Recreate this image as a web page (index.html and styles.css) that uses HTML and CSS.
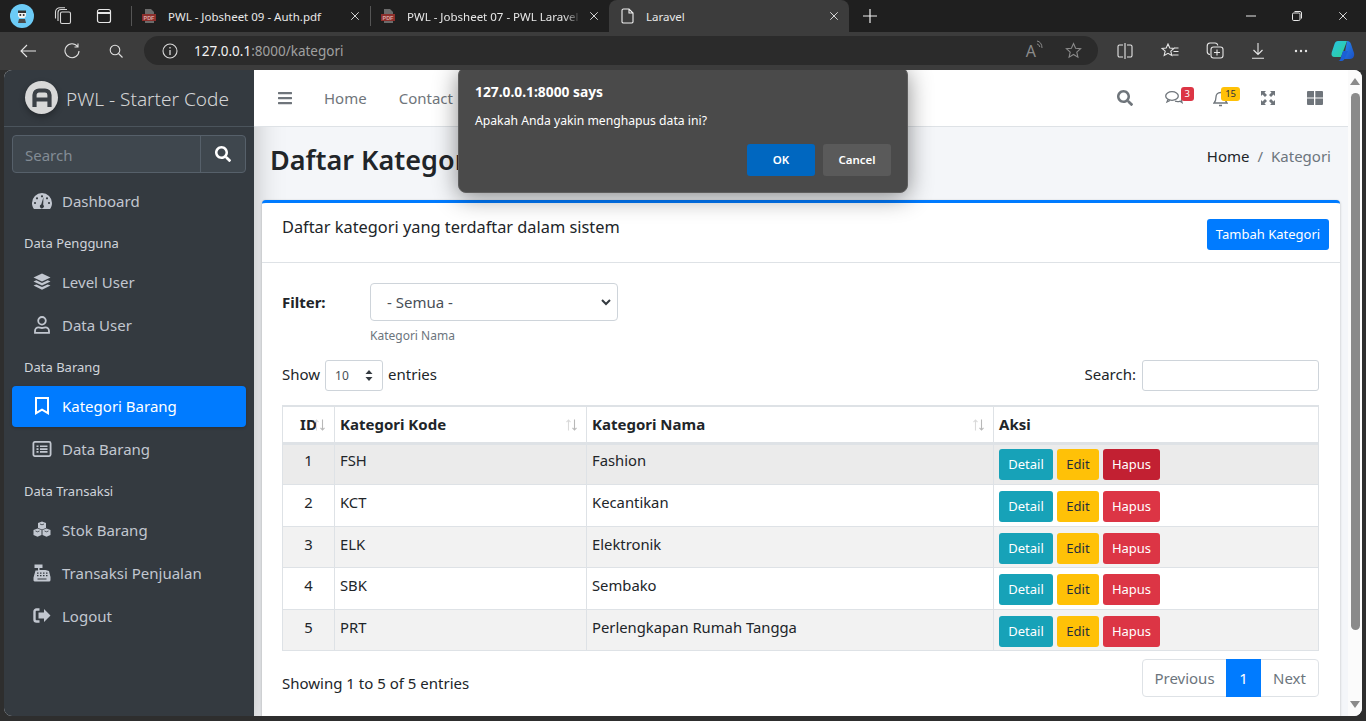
FILE: index.html
```html
<!DOCTYPE html>
<html>
  <head>
    <meta name="viewport" content="width=device-width, initial-scale=1.0">
    <title>Laravel</title>
    <link rel="stylesheet" href="styles.css">
  </head>

  <body>
    <svg class="sprites" width="0" height="0">
      <symbol id="i-search" viewBox="0 0 512 512"><path fill="currentColor" d="M505 442.7L405.3 343c-4.5-4.5-10.6-7-17-7H372c27.6-35.3 44-79.7 44-128C416 93.1 322.9 0 208 0S0 93.1 0 208s93.1 208 208 208c48.3 0 92.7-16.4 128-44v16.3c0 6.4 2.5 12.5 7 17l99.7 99.7c9.4 9.4 24.6 9.4 33.9 0l28.3-28.3c9.4-9.4 9.4-24.6.1-34zM208 336c-70.7 0-128-57.2-128-128 0-70.7 57.2-128 128-128 70.7 0 128 57.2 128 128 0 70.7-57.2 128-128 128z"/></symbol>
      <symbol id="i-close" viewBox="0 0 12 12"><path d="M1.5 1.5l9 9M10.5 1.5l-9 9" stroke="currentColor" stroke-width="1.1" fill="none"/></symbol>
      <symbol id="i-sort" viewBox="0 0 11 12"><path d="M2.500 11.500V1M.5 3.200l2-2.200 2 2.200" fill="none" stroke="#dadada" stroke-width="1.100"/><path d="M8.500 .5V11M6.500 8.800l2 2.200 2-2.200" fill="none" stroke="#b8b8b8" stroke-width="1.100"/></symbol>
    </svg>

    <!-- browser tabs -->
    <div class="tabstrip">
      <div class="slot slot-profile">
        <svg width="24" height="24" viewBox="0 0 24 24"><circle cx="12" cy="12" r="12" fill="#6ccbf6"/><path d="M8 7h8v5l-1.500 2h-5L8 12z" fill="#f2f2f2"/><path d="M8 6.500h8v2.500H8z" fill="#333"/><path d="M9 15h6l1 4H8z" fill="#4a4a4a"/><circle cx="10.300" cy="11" r="1" fill="#333"/><circle cx="13.700" cy="11" r="1" fill="#333"/></svg>
      </div>
      <div class="slot slot-collections">
        <svg width="18" height="18" viewBox="0 0 18 18" fill="none" stroke="#d8d8d8" stroke-width="1.100"><rect x="6.500" y="5" width="10" height="11.500" rx="1.500"/><path d="M4 14V5.500A3 3 0 0 1 7 2.500h6M1.500 11.500V5A4.500 4.500 0 0 1 6 .7h5"/></svg>
      </div>
      <div class="slot slot-tabs">
        <svg width="16" height="16" viewBox="0 0 16 16" fill="none" stroke="#e6e6e6" stroke-width="1.200"><rect x="1.500" y="1.500" width="13" height="13" rx="2"/><path d="M1.500 5h13" stroke-width="2"/></svg>
      </div>
      <div class="sep sep-first"></div>
      <div class="tab">
        <svg class="tab-ico" width="16" height="16" viewBox="0 0 16 16"><path d="M4 1h6l3 3v2H4z" fill="#6b6b6b"/><rect x="1" y="6" width="14" height="7" fill="#8c2f2c"/><path d="M4 13h9v2H4z" fill="#6b6b6b"/><text x="8" y="11.600" font-size="5.400" font-weight="700" text-anchor="middle" fill="#d9a9a6" font-family="Liberation Sans, sans-serif">PDF</text></svg>
        <span class="tab-text">PWL - Jobsheet 09 - Auth.pdf</span>
        <svg class="tab-close" width="10" height="10"><use href="#i-close"/></svg>
      </div>
      <div class="sep"></div>
      <div class="tab">
        <svg class="tab-ico" width="16" height="16" viewBox="0 0 16 16"><path d="M4 1h6l3 3v2H4z" fill="#6b6b6b"/><rect x="1" y="6" width="14" height="7" fill="#8c2f2c"/><path d="M4 13h9v2H4z" fill="#6b6b6b"/><text x="8" y="11.600" font-size="5.400" font-weight="700" text-anchor="middle" fill="#d9a9a6" font-family="Liberation Sans, sans-serif">PDF</text></svg>
        <span class="tab-text fade">PWL - Jobsheet 07 - PWL Laravel</span>
        <svg class="tab-close" width="10" height="10"><use href="#i-close"/></svg>
      </div>
      <div class="tab tab-active">
        <svg class="tab-ico" width="14" height="16" viewBox="0 0 14 16" fill="none" stroke="#f0f0f0" stroke-width="1.100"><path d="M2.500 1h5.500l4 4v9a1.500 1.500 0 0 1-1.500 1h-8A1.500 1.500 0 0 1 1 14V2.500A1.500 1.500 0 0 1 2.500 1zM8 1v4h4"/></svg>
        <span class="tab-text">Laravel</span>
        <svg class="tab-close" width="10" height="10"><use href="#i-close"/></svg>
      </div>
      <div class="slot slot-new">
        <svg width="14" height="14" viewBox="0 0 14 14"><path d="M7 0v14M0 7h14" stroke="#eee" stroke-width="1.200"/></svg>
      </div>
      <div class="spacer"></div>
      <div class="slot slot-win"><svg width="10" height="10" viewBox="0 0 10 10"><path d="M0 5h10" stroke="#e8e8e8"/></svg></div>
      <div class="slot slot-win"><svg width="10" height="10" viewBox="0 0 10 10" fill="none" stroke="#e8e8e8"><rect x=".5" y="2" width="7.500" height="7.500" rx="1.200"/><path d="M2.500 .5h5.500a1.500 1.500 0 0 1 1.500 1.500v5.500"/></svg></div>
      <div class="slot slot-win"><svg width="10" height="10"><use href="#i-close"/></svg></div>
    </div>

    <!-- browser toolbar -->
    <div class="toolbar">
      <div class="slot">
        <svg width="16" height="14" viewBox="0 0 16 14" fill="none" stroke="#e6e6e6" stroke-width="1.100"><path d="M16 7H1M7 1L1 7l6 6"/></svg>
      </div>
      <div class="slot">
        <svg width="16" height="16" viewBox="0 0 16 16" fill="none" stroke="#e0e0e0" stroke-width="1.100"><path d="M13.600 3.500A7 7 0 1 0 15 8M14 .5v3.500h-3.500"/></svg>
      </div>
      <div class="slot">
        <svg width="14" height="14" viewBox="0 0 14 14" fill="none" stroke="#e0e0e0" stroke-width="1.100"><circle cx="6" cy="6" r="4.800"/><path d="M9.500 9.500l4 4"/></svg>
      </div>
      <div class="addressbar">
        <svg class="addr-info" width="16" height="16" viewBox="0 0 16 16" fill="none" stroke="#d8d8d8" stroke-width="1.100"><circle cx="8" cy="8" r="7"/><path d="M8 7v5M8 4v1.500" stroke-width="1.300"/></svg>
        <span class="addr-url"><b>127.0.0.1</b>:8000/kategori</span>
        <div class="spacer"></div>
        <span class="addr-read">A<svg width="7" height="9" viewBox="0 0 7 9" fill="none" stroke="#8a8a8a"><path d="M1 1c3 .5 5 3 5 7M1 4c1.500.3 2.500 1.500 2.800 3"/></svg></span>
        <svg class="addr-star" width="17" height="17" viewBox="0 0 17 17" fill="none" stroke="#8a8a8a" stroke-width="1.100"><path d="M8.500 1.500l2.100 4.700 5 .5-3.800 3.400 1.100 5-4.400-2.600-4.400 2.600 1.100-5L1.400 6.700l5-.5z"/></svg>
      </div>
      <div class="slot slot-first">
        <svg width="16" height="16" viewBox="0 0 16 16" fill="none" stroke="#e6e6e6" stroke-width="1.100"><path d="M6 2H2.500A1.500 1.500 0 0 0 1 3.500v9A1.500 1.500 0 0 0 2.500 14H6M10 2h3.500A1.500 1.500 0 0 1 15 3.500v9a1.500 1.500 0 0 1-1.500 1.500H10M8 0v16"/></svg>
      </div>
      <div class="slot slot-wide">
        <svg width="18" height="16" viewBox="0 0 18 16" fill="none" stroke="#e6e6e6" stroke-width="1.100"><path d="M7 1l1.800 4 4.200.4-3.200 2.800 1 4.300L7 10.300l-3.800 2.200 1-4.300L1 5.400l4.200-.4zM13 5h4.500M12.500 8.500h5M11.500 12h6"/></svg>
      </div>
      <div class="slot">
        <svg width="18" height="17" viewBox="0 0 18 17" fill="none" stroke="#e6e6e6" stroke-width="1.100"><path d="M4 12.500A3 3 0 0 1 1.200 9.500V4A3 3 0 0 1 4 1h5a3 3 0 0 1 2.800 2.500"/><rect x="5" y="5" width="12" height="11" rx="2.500"/><path d="M11 7.500v6M8 10.500h6"/></svg>
      </div>
      <div class="slot slot-narrow">
        <svg width="14" height="16" viewBox="0 0 14 16" fill="none" stroke="#e6e6e6" stroke-width="1.100"><path d="M7 0v11.500M2.500 7L7 11.500 11.500 7M1 15.300h12"/></svg>
      </div>
      <div class="slot">
        <svg width="14" height="4" viewBox="0 0 14 4" fill="#e6e6e6"><circle cx="2" cy="2" r="1.200"/><circle cx="7" cy="2" r="1.200"/><circle cx="12" cy="2" r="1.200"/></svg>
      </div>
      <div class="slot slot-last">
        <svg width="24" height="24" viewBox="0 0 24 24"><defs><linearGradient id="cp1" x1="0" y1="0" x2="1" y2="1"><stop offset="0" stop-color="#27c3e8"/><stop offset="1" stop-color="#2fd08e"/></linearGradient><linearGradient id="cp2" x1="0" y1="0" x2="1" y2="1"><stop offset="0" stop-color="#2a8cf0"/><stop offset="1" stop-color="#1a4fc4"/></linearGradient></defs><path d="M7 2h9l-6 16H3.500C1 18 0 16 .7 13.500L3.500 5C4 3.200 5.500 2 7 2z" fill="url(#cp1)"/><path d="M16 2c2 0 3.500 1 4 3l3 9c.8 3-1 6-4 6h-8l3-7z" fill="url(#cp2)"/><path d="M10 18l2-6h5l-3 7c-.5 1.500-1.500 3-3.500 3H7c2 0 2.500-2 3-4z" fill="#1b5fd6"/></svg>
      </div>
    </div>

    <div class="viewport">
      <!-- sidebar -->
      <aside class="sidebar">
        <div class="brand">
          <div class="brand-logo">
            <svg width="20" height="20" viewBox="0 0 20 20" fill="none" stroke="#3b4046" stroke-width="4.200"><path d="M2.500 19V7a4.500 4.500 0 0 1 4.500-4.500h6A4.500 4.500 0 0 1 17.500 7v12M2.500 11.500h15"/></svg>
          </div>
          <span class="brand-text">PWL - Starter Code</span>
        </div>
        <div class="side-search">
          <div class="side-input">Search</div>
          <div class="side-btn"><svg width="16" height="16"><use href="#i-search"/></svg></div>
        </div>
        <nav class="nav">
          <a class="nav-link">
            <svg class="nav-ico" width="20" height="18" viewBox="0 0 20 18"><path fill="currentColor" d="M10 1a10 10 0 0 0-10 10c0 2 .5 3.800 1.400 5.300.2.400.6.700 1 .700h15.200c.4 0 .8-.3 1-.7.900-1.500 1.400-3.300 1.400-5.300A10 10 0 0 0 10 1z"/><g fill="#343a40"><path d="M11.500 5l-2.300 7.500a2 2 0 1 0 2 .3z"/><circle cx="10" cy="4.300" r="1.100"/><circle cx="5" cy="6.300" r="1.100"/><circle cx="3" cy="11" r="1.100"/><circle cx="15" cy="6.300" r="1.100"/><circle cx="17" cy="11" r="1.100"/></g></svg>
            <span>Dashboard</span>
          </a>
          <div class="nav-header">Data Pengguna</div>
          <a class="nav-link">
            <svg class="nav-ico" width="18" height="18" viewBox="0 0 18 18" fill="currentColor"><path d="M9 .5l8.500 4L9 8.500.5 4.500z"/><path d="M3.300 7.300L9 10l5.700-2.700 2.800 1.300L9 12.600.5 8.600z"/><path d="M3.300 11.400L9 14l5.700-2.600 2.800 1.200L9 16.800.5 12.600z"/></svg>
            <span>Level User</span>
          </a>
          <a class="nav-link">
            <svg class="nav-ico" width="16" height="18" viewBox="0 0 16 18" fill="none" stroke="currentColor" stroke-width="1.800"><circle cx="8" cy="4.800" r="3.800"/><path d="M1 16.900v-2a3.500 3.500 0 0 1 3.500-3.500c1 0 1.800.6 3.500.6s2.500-.6 3.500-.6A3.500 3.500 0 0 1 15 14.900v2z"/></svg>
            <span>Data User</span>
          </a>
          <div class="nav-header">Data Barang</div>
          <a class="nav-link active">
            <svg class="nav-ico" width="14" height="18" viewBox="0 0 14 18" fill="none" stroke="currentColor" stroke-width="2"><path d="M1 1h12v15.200l-6-3.500-6 3.500z"/></svg>
            <span>Kategori Barang</span>
          </a>
          <a class="nav-link">
            <svg class="nav-ico" width="19" height="16" viewBox="0 0 19 16"><rect x=".9" y=".9" width="17.200" height="14.200" rx="1.500" fill="none" stroke="currentColor" stroke-width="1.800"/><path d="M4 4.500h2v1.600H4zM7.500 4.500H15v1.600H7.500zM4 7.300h2v1.600H4zM7.500 7.300H15v1.600H7.500zM4 10.100h2v1.600H4zM7.500 10.100H15v1.600H7.500z" fill="currentColor"/></svg>
            <span>Data Barang</span>
          </a>
          <div class="nav-header">Data Transaksi</div>
          <a class="nav-link">
            <svg class="nav-ico" width="19" height="17" viewBox="0 0 19 17" fill="currentColor"><path d="M9.500.5l4 1.500v5l-4 1.600-4-1.600V2z"/><path d="M5 7.500l4 1.500v5L5 15.800 1 14V9z"/><path d="M14 7.500l4 1.500v5l-4 1.800-4-1.800V9z"/><path d="M3 10l2 .8 2-.8M12 10l2 .8 2-.8M7.500 3l2 .8 2-.8" stroke="#343a40" stroke-width=".8" fill="none"/></svg>
            <span>Stok Barang</span>
          </a>
          <a class="nav-link">
            <svg class="nav-ico" width="19" height="18" viewBox="0 0 19 18" fill="currentColor"><path d="M2 .5h8v3.500H7v2h6l3.500 1 1.500 6v3a1.500 1.500 0 0 1-1.500 1.500h-14A1.500 1.500 0 0 1 1 16.500v-3l2-7h2.500V4H2z"/><path d="M4.500 8.500h1.500v1.300H4.500zM7.500 8.500H9v1.300H7.500zM10.500 8.500H12v1.300h-1.500zM13.500 8.500H15v1.300h-1.500zM4.500 11h1.500v1.300H4.500zM7.500 11H9v1.300H7.500zM10.500 11H12v1.300h-1.500zM13.500 11H15v1.300h-1.500zM5 14.500h9v1H5z" fill="#343a40"/></svg>
            <span>Transaksi Penjualan</span>
          </a>
          <a class="nav-link">
            <svg class="nav-ico" width="18" height="15" viewBox="0 0 18 15"><path d="M6.500 1.500H3.500A2 2 0 0 0 1.500 3.500v8a2 2 0 0 0 2 2h3" fill="none" stroke="currentColor" stroke-width="2.400"/><path d="M11 1v3.500H5.500v6H11V14l6.500-6.500z" fill="currentColor"/></svg>
            <span>Logout</span>
          </a>
        </nav>
      </aside>

      <div class="wrapper">
        <!-- top navbar -->
        <header class="topbar">
          <svg class="top-bars" width="14" height="16" viewBox="0 0 448 512"><path fill="currentColor" d="M16 132h416c8.837 0 16-7.163 16-16V76c0-8.837-7.163-16-16-16H16C7.163 60 0 67.163 0 76v40c0 8.837 7.163 16 16 16zm0 160h416c8.837 0 16-7.163 16-16v-40c0-8.837-7.163-16-16-16H16c-8.837 0-16 7.163-16 16v40c0 8.837 7.163 16 16 16zm0 160h416c8.837 0 16-7.163 16-16v-40c0-8.837-7.163-16-16-16H16c-8.837 0-16 7.163-16 16v40c0 8.837 7.163 16 16 16z"/></svg>
          <a class="top-link">Home</a>
          <a class="top-link">Contact</a>
          <div class="spacer"></div>
          <div class="top-ico top-search">
            <svg width="16" height="16"><use href="#i-search"/></svg>
          </div>
          <div class="top-ico">
            <svg width="18" height="16" viewBox="0 0 18 16" fill="none" stroke="currentColor" stroke-width="1.300"><ellipse cx="7" cy="6" rx="6.300" ry="4.300"/><path d="M3 9.500L2 12l3-1.500M10 11.200c2.800.8 4 .3 5 0l2 1.300-.6-2.300c.6-.7 1-1.500.6-2.600"/></svg>
            <span class="badge badge-red">3</span>
          </div>
          <div class="top-ico">
            <svg width="15" height="17" viewBox="0 0 15 17" fill="none" stroke="currentColor" stroke-width="1.300"><path d="M1 13c1.500-1.500 2-3 2-6a4.500 4.500 0 0 1 9 0c0 3 .5 4.500 2 6z"/><path d="M6 15.500h3" stroke-width="1.500"/></svg>
            <span class="badge badge-yellow">15</span>
          </div>
          <div class="top-ico">
            <svg width="14" height="14" viewBox="0 0 14 14" fill="currentColor"><path d="M0 0h5L3.500 1.500 6 4 4 6 1.500 3.500 0 5zM14 0v5l-1.500-1.500L10 6 8 4l2.500-2.500L9 0zM0 14V9l1.500 1.500L4 8l2 2-2.500 2.500L5 14zM14 14H9l1.500-1.500L8 10l2-2 2.500 2.500L14 9z"/></svg>
          </div>
          <div class="top-ico">
            <svg width="16" height="14" viewBox="0 0 16 14" fill="currentColor"><path d="M0 1a1 1 0 0 1 1-1h6v6.400H0zM8.300 0H15a1 1 0 0 1 1 1v5.400H8.300zM0 7.600h7V14H1a1 1 0 0 1-1-1zM8.300 7.600H16V13a1 1 0 0 1-1 1H8.300z"/></svg>
          </div>
        </header>

        <div class="content">
          <div class="content-head">
            <h1>Daftar Kategori</h1>
            <div class="breadcrumb"><a>Home</a><i>/</i><span>Kategori</span></div>
          </div>

          <section class="card">
            <div class="card-head">
              <h3>Daftar kategori yang terdaftar dalam sistem</h3>
              <a class="btn btn-add">Tambah Kategori</a>
            </div>
            <div class="card-body">
              <div class="filter">
                <label>Filter:</label>
                <div>
                  <div class="filter-select">
                    <span>- Semua -</span>
                    <svg width="10" height="7" viewBox="0 0 10 7" fill="none" stroke="#343a40" stroke-width="2"><path d="M1 1l4 4 4-4"/></svg>
                  </div>
                  <small>Kategori Nama</small>
                </div>
              </div>

              <div class="dt-top">
                <div class="dt-length">
                  <span class="dt-label">Show</span>
                  <div class="length-select">
                    <span>10</span>
                    <svg width="8" height="11" viewBox="0 0 8 11" fill="#343a40"><path d="M4 0l3.500 4H.5zM4 11L.5 7h7z"/></svg>
                  </div>
                  <span class="dt-label">entries</span>
                </div>
                <div class="dt-search"><span class="dt-label">Search:</span><div class="dt-input"></div></div>
              </div>

              <table class="table">
                <colgroup>
                  <col class="col-id"><col class="col-kode"><col class="col-nama"><col>
                </colgroup>
                <thead>
                  <tr>
                    <th class="center">ID<svg class="sort" width="11" height="12"><use href="#i-sort"/></svg></th>
                    <th>Kategori Kode<svg class="sort" width="11" height="12"><use href="#i-sort"/></svg></th>
                    <th>Kategori Nama<svg class="sort" width="11" height="12"><use href="#i-sort"/></svg></th>
                    <th>Aksi</th>
                  </tr>
                </thead>
                <tbody>
                  <tr class="hover">
                    <td class="center">1</td><td>FSH</td><td>Fashion</td>
                    <td class="actions"><div class="btn-row"><a class="btn btn-sm btn-info">Detail</a><a class="btn btn-sm btn-warning">Edit</a><a class="btn btn-sm btn-danger hovered">Hapus</a></div></td>
                  </tr>
                  <tr>
                    <td class="center">2</td><td>KCT</td><td>Kecantikan</td>
                    <td class="actions"><div class="btn-row"><a class="btn btn-sm btn-info">Detail</a><a class="btn btn-sm btn-warning">Edit</a><a class="btn btn-sm btn-danger">Hapus</a></div></td>
                  </tr>
                  <tr class="odd">
                    <td class="center">3</td><td>ELK</td><td>Elektronik</td>
                    <td class="actions"><div class="btn-row"><a class="btn btn-sm btn-info">Detail</a><a class="btn btn-sm btn-warning">Edit</a><a class="btn btn-sm btn-danger">Hapus</a></div></td>
                  </tr>
                  <tr>
                    <td class="center">4</td><td>SBK</td><td>Sembako</td>
                    <td class="actions"><div class="btn-row"><a class="btn btn-sm btn-info">Detail</a><a class="btn btn-sm btn-warning">Edit</a><a class="btn btn-sm btn-danger">Hapus</a></div></td>
                  </tr>
                  <tr class="odd">
                    <td class="center">5</td><td>PRT</td><td>Perlengkapan Rumah Tangga</td>
                    <td class="actions"><div class="btn-row"><a class="btn btn-sm btn-info">Detail</a><a class="btn btn-sm btn-warning">Edit</a><a class="btn btn-sm btn-danger">Hapus</a></div></td>
                  </tr>
                </tbody>
              </table>

              <div class="dt-bottom">
                <div class="dt-info">Showing 1 to 5 of 5 entries</div>
                <div class="pager"><a class="pg-prev">Previous</a><a class="pg-cur">1</a><a class="pg-next">Next</a></div>
              </div>
            </div>
          </section>
        </div>
      </div>

      <!-- page scrollbar -->
      <div class="scrollbar">
        <svg width="10" height="7" viewBox="0 0 10 7" fill="#8a8a8a"><path d="M5 0l5 7H0z"/></svg>
        <div class="thumb"></div>
        <div class="spacer"></div>
        <svg width="10" height="7" viewBox="0 0 10 7" fill="#8a8a8a"><path d="M0 0h10L5 7z"/></svg>
      </div>

      <!-- browser confirm dialog -->
      <div class="dialog">
        <div class="dialog-title">127.0.0.1:8000 says</div>
        <div class="dialog-msg">Apakah Anda yakin menghapus data ini?</div>
        <div class="dialog-btns"><a class="dlg-ok">OK</a><a class="dlg-cancel">Cancel</a></div>
      </div>
    </div>
  </body>
</html>
```
FILE: styles.css
```css
* {
  box-sizing: border-box;
}

html, body {
  margin: 0;
  height: 721px;
  overflow: hidden;
}

body {
  display: flex;
  flex-direction: column;
  background-color: #2e2e2e;
  font-family: "Noto Sans", "Open Sans", sans-serif;
  font-size: 15px;
  color: #212529;
}

.sprites {
  position: absolute;
}

.spacer {
  flex: 1;
}

.slot {
  width: 44px;
  flex: none;
  display: flex;
  align-items: center;
  justify-content: center;
}

/* Browser tabs */
.tabstrip {
  height: 32px;
  flex: none;
  display: flex;
  background-color: #1f1f1f;
  color: #e8e8e8;
  font-size: 11.500px;
}

.slot-collections { width: 37px; }
.slot-tabs { width: 45px; }
.slot-win { width: 46px; }
.slot-new { width: 42px; }

.sep {
  width: 1px;
  height: 20px;
  margin: 6px 0 0 0;
  flex: none;
  background-color: #555;
}

.sep-first {
  margin-left: 5px;
}

.tab {
  width: 238px;
  flex: none;
  display: flex;
  align-items: center;
  padding: 0 10px 0 9px;
}

.tab-ico {
  flex: none;
  margin-right: 11px;
}

.tab-text {
  flex: 1;
  white-space: nowrap;
  overflow: hidden;
}

.tab-text.fade {
  -webkit-mask-image: linear-gradient(to right, #000 90%, transparent);
  mask-image: linear-gradient(to right, #000 90%, transparent);
}

.tab-close {
  flex: none;
  margin-left: 8px;
  color: #e4e4e4;
}

.tab-active {
  width: 240px;
  background-color: #3c3c3c;
  border-radius: 8px 8px 0 0;
  padding-left: 12px;
}

/* Browser toolbar */
.toolbar {
  height: 38px;
  flex: none;
  display: flex;
  padding: 4px 0 5px 6px;
  background-color: #3c3c3c;
}

.addressbar {
  width: 954px;
  flex: none;
  margin-left: 6px;
  display: flex;
  align-items: center;
  padding: 0 16px 0 18px;
  border-radius: 15px;
  background-color: #2b2b2b;
  color: #a0a0a0;
  font-size: 13.500px;
}

.addr-info {
  margin-right: 16px;
}

.addr-url b {
  font-weight: 400;
  color: #f2f2f2;
}

.addr-read {
  display: flex;
  font-size: 16px;
  color: #8a8a8a;
  margin-right: 22px;
}

.slot-first { margin-left: 5px; }
.slot-wide { width: 46px; }
.slot-narrow { width: 42px; }
.slot-last { width: 40px; }

/* Page area */
.viewport {
  position: relative;
  width: 1358px;
  height: 646px;
  flex: none;
  margin-left: 4px;
  display: flex;
  border-radius: 8px;
  overflow: hidden;
  background-color: #f4f6f9;
}

/* Sidebar */
.sidebar {
  width: 250px;
  flex: none;
  padding: 0 8px;
  background-color: #343a40;
  box-shadow: 0 14px 28px rgba(0, 0, 0, .25);
  color: #c2c7d0;
}

.brand {
  height: 57px;
  margin: 0 -8px;
  padding-left: 21px;
  display: flex;
  align-items: center;
  border-bottom: 1px solid #4b545c;
}

.brand-logo {
  width: 33px;
  height: 33px;
  flex: none;
  display: flex;
  align-items: center;
  justify-content: center;
  border-radius: 50%;
  background-color: #d8d8d8;
  box-shadow: 0 3px 6px rgba(0, 0, 0, .3);
  margin-top: -1px;
}

.brand-text {
  margin: 2px 0 0 8px;
  font-size: 19px;
  font-weight: 300;
  color: rgba(255, 255, 255, .8);
}

.side-search {
  height: 38px;
  margin-top: 8px;
  display: flex;
  border: 1px solid #56606a;
  border-radius: 4px;
  background-color: #3f474e;
}

.side-input {
  flex: 1;
  padding: 0 12px;
  line-height: 38px;
  color: #838c95;
  border-right: 1px solid #56606a;
}

.side-btn {
  width: 44px;
  display: flex;
  align-items: center;
  justify-content: center;
  color: #fff;
}

.nav {
  margin-top: 8px;
}

.nav-link {
  height: 41px;
  margin-bottom: 2px;
  padding: 0 0 2px 16px;
  display: flex;
  align-items: center;
  border-radius: 4px;
}

.nav-ico {
  width: 26px;
  flex: none;
  margin: 0 7px 0 1px;
  color: #c2c7d0;
}

.nav-link.active {
  background-color: #007bff;
  box-shadow: 0 1px 3px rgba(0, 0, 0, .2);
  color: #fff;
}

.nav-link.active .nav-ico {
  color: #fff;
}

.nav-header {
  height: 38px;
  padding-left: 12px;
  display: flex;
  align-items: center;
  font-size: 13px;
  color: #d0d4db;
}

/* Right side */
.wrapper {
  width: 1094px;
  flex: none;
  display: flex;
  flex-direction: column;
}

.topbar {
  height: 57px;
  flex: none;
  display: flex;
  align-items: center;
  padding: 0 10px 0 24px;
  background-color: #fff;
  border-bottom: 1px solid #dee2e6;
  color: #6f757b;
}

.top-bars {
  margin-right: 32px;
}

.top-link {
  margin-right: 32px;
}

.top-ico {
  position: relative;
  width: 47px;
  display: flex;
  justify-content: center;
}

.top-search {
  margin-right: 2px;
}

.badge {
  position: absolute;
  top: -3px;
  right: 3px;
  padding: 0 4px;
  min-width: 13px;
  height: 14px;
  border-radius: 3px;
  font-size: 9.500px;
  line-height: 14px;
  text-align: center;
}

.badge-red {
  background-color: #dc3545;
  color: #fff;
}

.badge-yellow {
  right: 4px;
  background-color: #ffc107;
  color: #1f2d3d;
}

.content {
  flex: 1;
  min-height: 0;
}

.content-head {
  height: 73px;
  padding: 0 17px 8px 16px;
  display: flex;
  align-items: center;
  justify-content: space-between;
}

.content-head h1 {
  margin: 0;
  font-size: 27px;
  font-weight: 600;
}

.breadcrumb {
  display: flex;
  margin-top: -8px;
}

.breadcrumb i {
  font-style: normal;
  color: #6c757d;
  margin: 0 8px;
}

.breadcrumb span {
  color: #6c757d;
}

.card {
  width: 1078px;
  margin-left: 8px;
  border-top: 3px solid #007bff;
  border-radius: 4px 4px 0 0;
  background-color: #fff;
  box-shadow: 0 0 1px rgba(0, 0, 0, .125), 0 1px 3px rgba(0, 0, 0, .2);
}

.card-head {
  height: 60px;
  display: flex;
  justify-content: space-between;
  padding: 16px 11px 0 20px;
  border-bottom: 1px solid #dee2e6;
}

.card-head h3 {
  margin: -4px 0 0;
  font-size: 16.350px;
  font-weight: 400;
  line-height: 24px;
}

.btn {
  display: inline-block;
  border-radius: 3px;
  text-align: center;
}

.btn-add {
  height: 31px;
  width: 122px;
  background-color: #007bff;
  color: #fff;
  font-size: 13px;
  line-height: 31px;
}

.card-body {
  padding: 20px 21px 20px 20px;
}

.filter {
  display: flex;
}

.filter label {
  width: 88px;
  font-weight: 700;
  line-height: 38px;
}

.filter-select {
  width: 248px;
  height: 38px;
  display: flex;
  align-items: center;
  justify-content: space-between;
  padding: 0 6px 0 16px;
  border: 1px solid #ced4da;
  border-radius: 4px;
  color: #495057;
}

.filter small {
  display: block;
  margin-top: 6px;
  font-size: 12px;
  color: #6c757d;
}

.dt-top {
  display: flex;
  justify-content: space-between;
  margin-top: 16px;
  height: 31px;
}

.dt-length,
.dt-search {
  display: flex;
  align-items: center;
}

.dt-label {
  margin-bottom: 3px;
}

.length-select {
  width: 58px;
  height: 31px;
  margin: 0 5px;
  padding: 0 9px;
  display: flex;
  align-items: center;
  justify-content: space-between;
  border: 1px solid #ced4da;
  border-radius: 3px;
  font-size: 12px;
  color: #495057;
}

.dt-input {
  width: 177px;
  height: 31px;
  margin-left: 6px;
  border: 1px solid #ced4da;
  border-radius: 3px;
}

/* Table */
.table {
  width: 1037px;
  margin-top: 14px;
  table-layout: fixed;
  border-collapse: collapse;
  border: 1px solid #dee2e6;
}

.col-id { width: 52px; }
.col-kode { width: 252px; }
.col-nama { width: 407px; }

.table th {
  position: relative;
  height: 37px;
  padding: 0 5px;
  text-align: left;
  font-weight: 700;
  border: 1px solid #dee2e6;
  border-top-width: 2px;
  border-bottom-width: 3px;
}

.table td {
  height: 41.600px;
  padding: 7px 5px 0;
  vertical-align: top;
  font-size: 14.800px;
  border: 1px solid #dee2e6;
}

.table th.center,
.table td.center {
  text-align: center;
}

.table .hover td {
  padding-top: 5px;
}

.table td.actions {
  padding-top: 6px;
}

.table .hover td.actions {
  padding-top: 4px;
}

.btn-row {
  display: flex;
  gap: 4px;
}

.table .odd {
  background-color: #f2f2f2;
}

.table .hover {
  background-color: #ebebeb;
}

.sort {
  position: absolute;
  right: 9px;
  top: 12px;
}

.btn-sm {
  height: 31px;
  font-size: 13px;
  line-height: 31px;
  border-radius: 3px;
}

.btn-info {
  width: 54px;
  background-color: #17a2b8;
  color: #fff;
}

.btn-warning {
  width: 42px;
  background-color: #ffc107;
  color: #1f2d3d;
}

.btn-danger {
  width: 57px;
  background-color: #dc3545;
  color: #fff;
}

.btn-danger.hovered {
  background-color: #c22032;
}

.dt-bottom {
  display: flex;
  justify-content: space-between;
  margin-top: 8px;
}

.dt-info {
  margin-top: 14px;
}

.pager {
  display: flex;
  height: 38px;
  line-height: 36px;
  border: 1px solid #dee2e6;
  border-radius: 4px;
  color: #6c757d;
  text-align: center;
}

.pg-prev { width: 83px; }
.pg-next { width: 57px; }

.pg-cur {
  width: 35px;
  margin: -1px 0;
  line-height: 38px;
  background-color: #007bff;
  color: #fff;
}

/* Scrollbar */
.scrollbar {
  width: 14px;
  flex: none;
  display: flex;
  flex-direction: column;
  align-items: center;
  padding: 8px 0 8px;
  background-color: #fbfbfb;
}

.thumb {
  width: 9px;
  height: 537px;
  margin-top: 8px;
  border-radius: 5px;
  background-color: #8a8a8a;
}

/* Confirm dialog */
.dialog {
  position: absolute;
  left: 454px;
  top: -3px;
  width: 450px;
  height: 126px;
  padding: 14px 16px 0;
  background-color: #4a4a4a;
  border: 1px solid #5e5e5e;
  border-radius: 8px;
  box-shadow: 0 4px 24px rgba(0, 0, 0, .45);
  color: #fff;
  font-size: 12.200px;
}

.dialog-title {
  font-size: 13.800px;
  font-weight: 700;
}

.dialog-msg {
  margin-top: 11px;
}

.dialog-btns {
  display: flex;
  justify-content: flex-end;
  gap: 8px;
  margin-top: 15px;
  font-size: 11.500px;
  font-weight: 600;
  line-height: 32px;
  text-align: center;
}

.dialog-btns a {
  width: 68px;
  height: 32px;
  border-radius: 3px;
}

.dlg-ok {
  background-color: #0067c0;
}

.dlg-cancel {
  background-color: #5a5a5a;
}
```
